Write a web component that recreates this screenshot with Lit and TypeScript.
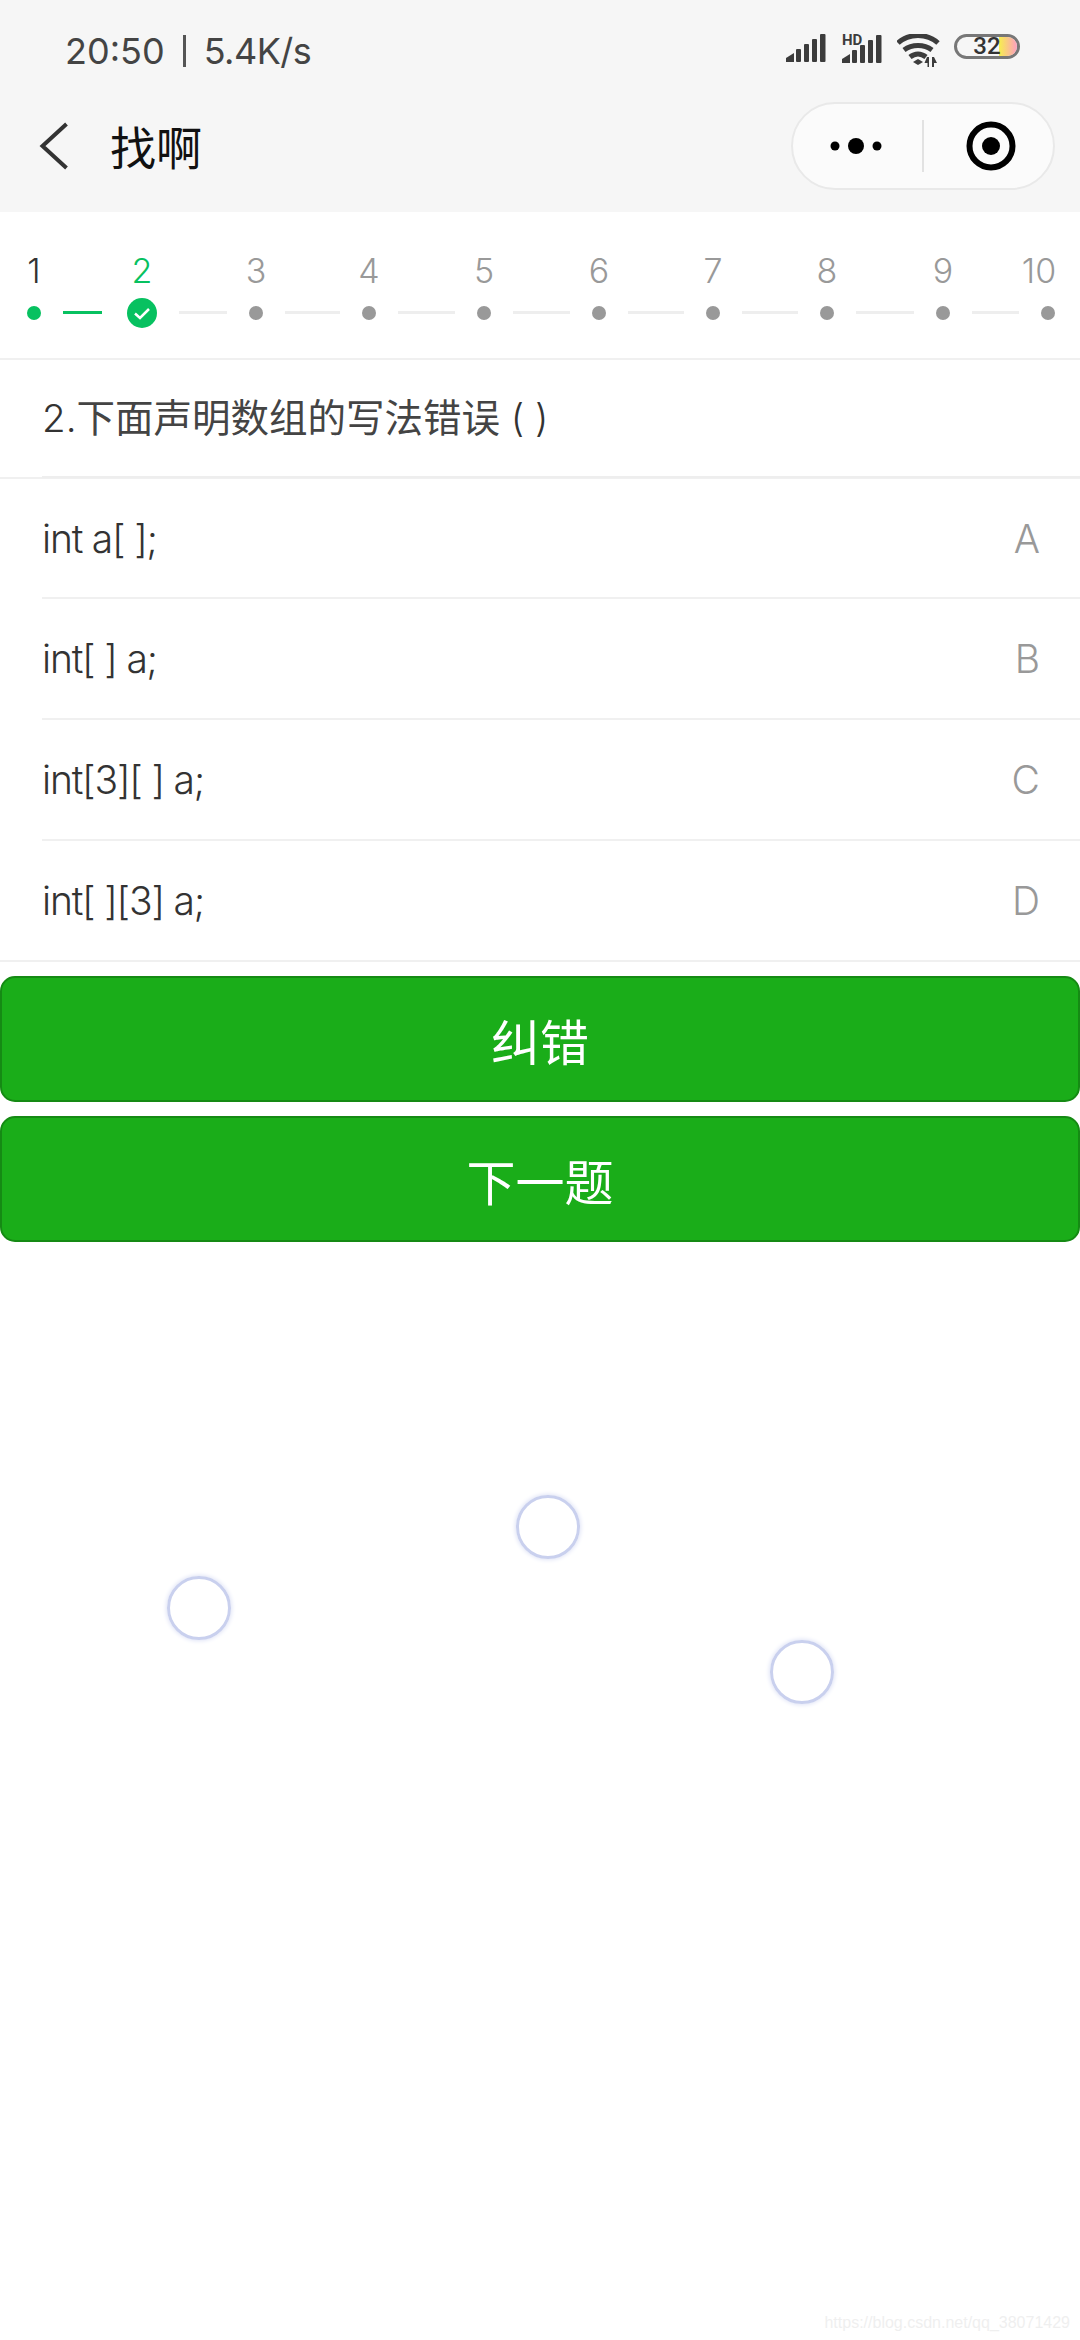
import { LitElement, html, css, svg } from "lit";
import { customElement } from "lit/decorators.js";

const steps = [
  { n: "1", state: "done", line: 39 },
  { n: "2", state: "current", line: 48 },
  { n: "3", state: "", line: 55 },
  { n: "4", state: "", line: 57 },
  { n: "5", state: "", line: 57 },
  { n: "6", state: "", line: 56 },
  { n: "7", state: "", line: 56 },
  { n: "8", state: "", line: 58 },
  { n: "9", state: "", line: 47 },
  { n: "10", state: "", line: 0 },
];

const options = [
  { text: "int a[ ];", key: "A" },
  { text: "int[ ] a;", key: "B" },
  { text: "int[3][ ] a;", key: "C" },
  { text: "int[ ][3] a;", key: "D" },
];

const rings = [
  { x: 548, y: 1527 },
  { x: 199, y: 1608 },
  { x: 802, y: 1672 },
];

const bars = svg`
  <path d="M0 28v-4l8-5v9z" />
  <rect x="10" y="15" width="5" height="13" rx="1" />
  <rect x="18" y="10" width="5" height="18" rx="1" />
  <rect x="26" y="5" width="5" height="23" rx="1" />
  <rect x="34" y="0" width="5.5" height="28" rx="1" />
`;

@customElement("app-root")
export class AppRoot extends LitElement {
  static styles = css`
    :host {
      display: block;
      position: relative;
      width: 1080px;
      height: 2340px;
      background: #fff;
      overflow: hidden;
      font-family: Inter, "Noto Sans CJK SC", sans-serif;
      color: #333;
    }

    .top {
      height: 212px;
      background: #f6f6f6;
      display: flex;
      flex-direction: column;
    }
    .status {
      height: 102px;
      display: flex;
      align-items: center;
      justify-content: space-between;
      padding: 0 60px 0 65px;
      font-size: 36px;
      color: #444;
    }
    .speed {
      display: flex;
      align-items: center;
      gap: 18px;
    }
    .speed .rate {
      letter-spacing: -0.5px;
    }
    .sep {
      width: 3px;
      height: 32px;
      background: #555;
    }
    .icons {
      display: flex;
      align-items: flex-start;
    }
    .icons svg {
      display: block;
      fill: #3c3c3c;
    }
    .battery {
      position: relative;
      width: 66px;
      height: 25px;
      box-sizing: border-box;
      margin-left: 13px;
      border: 3px solid #777;
      border-radius: 13px;
      display: flex;
      align-items: center;
      justify-content: center;
      font-family: Roboto, sans-serif;
      font-size: 24px;
      line-height: 19px;
      font-weight: 500;
      color: #333;
    }
    .charge {
      position: absolute;
      top: 0;
      right: 0;
      bottom: 0;
      width: 18px;
      border-radius: 0 10px 10px 0;
      background: linear-gradient(to right, #f7ee4e, #fd9fc0);
    }
    .battery span {
      position: relative;
    }
    .nav {
      flex: 1;
      display: flex;
      align-items: center;
      padding: 0 25px 22px 38px;
    }
    .back {
      width: 32px;
      height: 52px;
      fill: none;
      stroke: #333;
      stroke-width: 4;
    }
    .title {
      margin: -2px 0 0 40px;
      font-size: 46px;
      line-height: 52px;
      font-family: "Noto Sans CJK SC", sans-serif;
      font-weight: 400;
      color: #111;
      flex: 1;
    }
    .capsule {
      width: 264px;
      height: 88px;
      box-sizing: border-box;
      border: 2px solid #e9e9e9;
      border-radius: 44px;
      background: #fbfbfb;
      display: flex;
      align-items: center;
    }
    .capsule svg {
      display: block;
    }
    .capsule .part {
      width: 129px;
      box-sizing: border-box;
      display: flex;
      justify-content: center;
    }
    .capsule .part.menu {
      padding-right: 3px;
    }
    .capsule .part.target {
      padding-left: 5px;
    }
    .capsule .div {
      width: 2px;
      height: 52px;
      background: #e2e2e2;
    }

    .steps {
      height: 148px;
      box-sizing: border-box;
      display: flex;
      align-items: flex-end;
      gap: 22px;
      padding: 0 0 38px 27px;
      border-bottom: 2px solid #f0f0f0;
    }
    .step {
      width: 14px;
      display: flex;
      flex-direction: column;
      align-items: center;
    }
    .num {
      font-size: 34px;
      line-height: 40px;
      font-weight: 300;
      color: #999;
      white-space: nowrap;
      margin-bottom: 15px;
    }
    .num.ten {
      margin-right: 18px;
    }
    .dot {
      width: 14px;
      height: 14px;
      border-radius: 50%;
      background: #999;
    }
    .step.done .num {
      color: #333;
    }
    .step.done .dot {
      background: #07c160;
    }
    .step.current {
      width: 30px;
      margin-left: 3px;
    }
    .step.current .num {
      color: #07c160;
      margin-bottom: 7px;
    }
    .step.current svg {
      display: block;
      margin-bottom: -8px;
    }
    .line {
      height: 3px;
      background: #eee;
      margin-bottom: 6px;
    }
    .line.on {
      background: #07c160;
    }

    .question {
      height: 119px;
      box-sizing: border-box;
      padding-left: 42px;
      font-size: 38.5px;
      font-weight: 400;
      color: #444;
      border-bottom: 2px solid #f0f0f0;
    }
    .question div {
      height: 116px;
      line-height: 116px;
      border-bottom: 2px solid #eee;
      white-space: nowrap;
    }
    .question .latin {
      font-weight: 300;
      color: #333;
    }
    .row {
      height: 121px;
      box-sizing: border-box;
      margin-left: 42px;
      padding-right: 40px;
      display: flex;
      align-items: center;
      justify-content: space-between;
      border-bottom: 2px solid #f0f0f0;
      font-size: 39px;
      font-weight: 300;
    }
    .row .text {
      letter-spacing: -1.2px;
    }
    .row .key {
      color: #999;
    }
    .list {
      display: flex;
      flex-direction: column;
    }
    .list .row:first-child {
      height: 120px;
    }
    .list .row:last-child {
      margin-left: 0;
      padding-left: 42px;
    }

    .buttons {
      margin-top: 14px;
      display: flex;
      flex-direction: column;
      gap: 14px;
    }
    .btn {
      height: 126px;
      box-sizing: border-box;
      background: #1aad19;
      border: 2px solid #158a14;
      border-radius: 15px;
      color: #fff;
      font-size: 49px;
      font-family: "Noto Sans CJK SC", sans-serif;
      font-weight: 400;
      display: flex;
      align-items: center;
      justify-content: center;
    }

    .ring {
      position: absolute;
      width: 58px;
      height: 58px;
      border-radius: 50%;
      border: 3px solid #c9d0ee;
      box-shadow: 0 0 4px 1px #dfe3f6;
      transform: translate(-32px, -32px);
    }
    .mark {
      position: absolute;
      right: 10px;
      bottom: 8px;
      font-family: "Liberation Sans", sans-serif;
      font-size: 16px;
      color: #efefef;
    }
  `;

  renderStatus() {
    return html`
      <div class="status">
        <div class="speed">
          <span>20:50</span><span class="sep"></span><span class="rate">5.4K/s</span>
        </div>
        <div class="icons">
          <svg width="40" height="28" viewBox="0 0 40 28">${bars}</svg>
          <svg width="40" height="36" viewBox="0 -6 40 36" style="margin-left:16px;margin-top:-6px">
            <g transform="translate(0 1)">${bars}</g>
            <text x="0" y="11" font-size="15" font-weight="700" font-family="Roboto, sans-serif">HD</text>
          </svg>
          <svg width="44" height="34" viewBox="0 0 44 34" style="margin-left:15px">
            <path d="M1 9C12-1 30-1 41 9" fill="none" stroke="#3c3c3c" stroke-width="5" />
            <path d="M7 16c8-6 20-6 28 0" fill="none" stroke="#3c3c3c" stroke-width="5" />
            <path d="M13 23c5-4 11-4 16 0" fill="none" stroke="#3c3c3c" stroke-width="5" />
            <path d="M21 25l5 3-5 3-5-3z" />
            <path d="M30 23h2v10h-1.500v-4h-3zM35 33h2v-4h3l-3-6h-2z" />
          </svg>
          <div class="battery"><i class="charge"></i><span>32</span></div>
        </div>
      </div>
    `;
  }

  renderNav() {
    return html`
      <div class="nav">
        <svg class="back" viewBox="0 0 32 52"><path d="M28.500 4 4.500 26l24 22" /></svg>
        <span class="title">找啊</span>
        <div class="capsule">
          <div class="part menu">
            <svg width="62" height="20" viewBox="0 0 62 20">
              <circle cx="10" cy="10" r="4.500" />
              <circle cx="31" cy="10" r="8" />
              <circle cx="52" cy="10" r="4.500" />
            </svg>
          </div>
          <span class="div"></span>
          <div class="part target">
            <svg width="50" height="50" viewBox="0 0 50 50">
              <circle cx="25" cy="25" r="21.500" fill="none" stroke="#000" stroke-width="6" />
              <circle cx="25" cy="25" r="9" />
            </svg>
          </div>
        </div>
      </div>
    `;
  }

  renderSteps() {
    return html`
      <div class="steps">
        ${steps.map(
          (s, i) => html`
            <div class="step ${s.state}">
              <span class="num ${s.n === "10" ? "ten" : ""}">${s.n}</span>
              ${s.state === "current"
                ? html`<svg width="30" height="30" viewBox="0 0 30 30">
                    <circle cx="15" cy="15" r="15" fill="#07c160" />
                    <path d="M8 15.500l5 4.500 9-9" fill="none" stroke="#fff" stroke-width="2.500" />
                  </svg>`
                : html`<span class="dot"></span>`}
            </div>
            ${s.line
              ? html`<span class="line ${i === 0 ? "on" : ""}" style="width:${s.line}px"></span>`
              : ""}
          `
        )}
      </div>
    `;
  }

  render() {
    return html`
      <div class="top">${this.renderStatus()} ${this.renderNav()}</div>
      ${this.renderSteps()}
      <div class="question">
        <div><span class="latin">2.</span>下面声明数组的写法错误<span class="latin"> ( )</span></div>
      </div>
      <div class="list">
        ${options.map(
          (o) => html`<div class="row"><span class="text">${o.text}</span><span class="key">${o.key}</span></div>`
        )}
      </div>
      <div class="buttons">
        <div class="btn">纠错</div>
        <div class="btn">下一题</div>
      </div>
      ${rings.map((r) => html`<span class="ring" style="left:${r.x}px;top:${r.y}px"></span>`)}
      <span class="mark">https://blog.csdn.net/qq_38071429</span>
    `;
  }
}
